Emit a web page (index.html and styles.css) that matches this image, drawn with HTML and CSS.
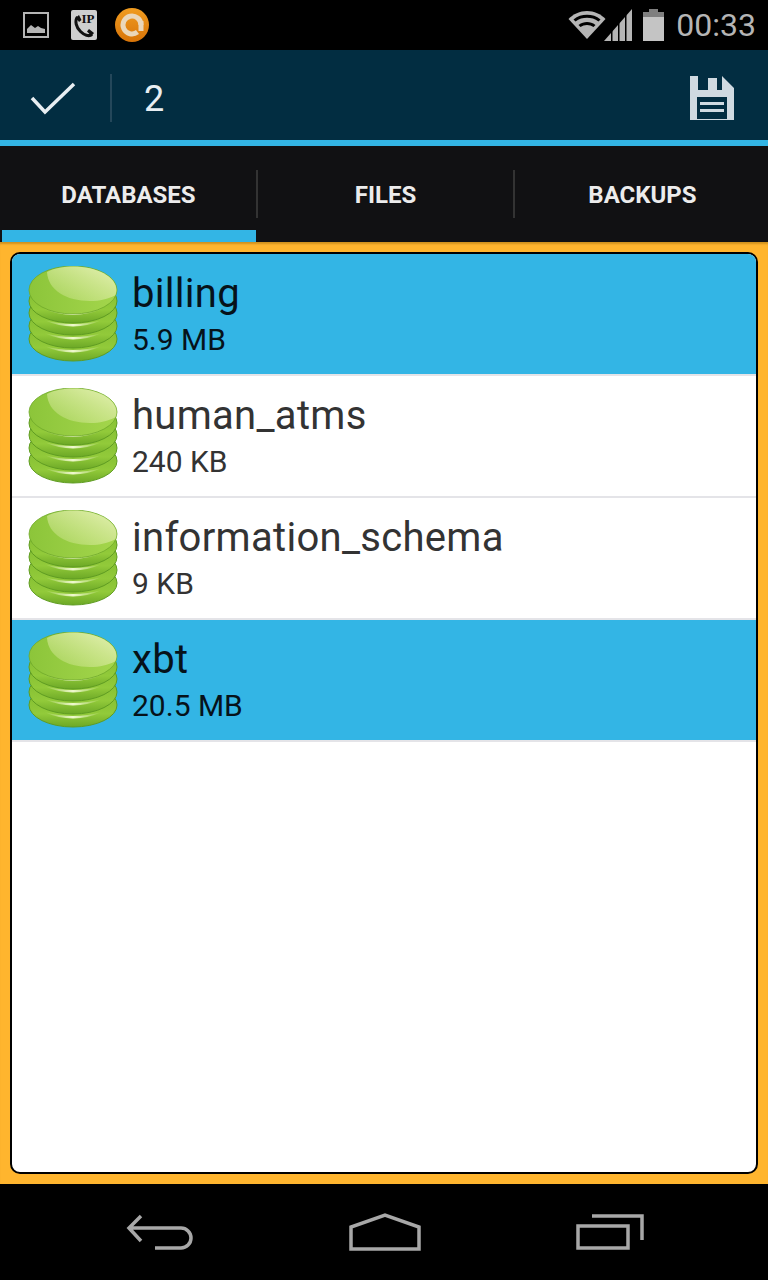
FILE: index.html
```html
<!DOCTYPE html>
<html>
<head>
  <meta charset="utf-8">
  <title>Databases</title>
  <link rel="stylesheet" href="styles.css">
</head>
<body>
  <svg class="defs" width="0" height="0">
    <defs>
      <linearGradient id="side" x1="0" x2="0" y1="0" y2="1">
        <stop offset="0" stop-color="#7cb82e"/>
        <stop offset=".7" stop-color="#92ca3a"/>
        <stop offset="1" stop-color="#6ca826"/>
      </linearGradient>
      <linearGradient id="top" x1="0" x2="1" y1="0" y2="0">
        <stop offset="0" stop-color="#8cc53a"/>
        <stop offset="1" stop-color="#a4d64c"/>
      </linearGradient>
      <linearGradient id="shine" x1="0" x2="1" y1="1" y2="0">
        <stop offset="0" stop-color="#cfe68e" stop-opacity=".3"/>
        <stop offset=".6" stop-color="#d6e99c" stop-opacity=".8"/>
        <stop offset="1" stop-color="#e6f2b6"/>
      </linearGradient>
      <linearGradient id="streak" x1="0" x2="1" y1="0" y2="0">
        <stop offset="0" stop-color="#e8f6bc" stop-opacity="0"/>
        <stop offset=".5" stop-color="#f0f9d0"/>
        <stop offset="1" stop-color="#e8f6bc" stop-opacity="0"/>
      </linearGradient>
      <linearGradient id="orange" x1="0" x2="0" y1="0" y2="1">
        <stop offset="0" stop-color="#f09c20"/>
        <stop offset="1" stop-color="#d87408"/>
      </linearGradient>
      <symbol id="db" viewBox="0 0 90 96">
        <ellipse cx="45" cy="73" rx="44" ry="22" fill="url(#side)" stroke="#5f9c22"/>
        <path d="M16 80Q45 93 74 80Q45 88 16 80z" fill="url(#streak)"/>
        <ellipse cx="45" cy="60" rx="44" ry="22" fill="url(#side)" stroke="#5f9c22"/>
        <path d="M16 67Q45 80 74 67Q45 75 16 67z" fill="url(#streak)"/>
        <ellipse cx="45" cy="47" rx="44" ry="22" fill="url(#side)" stroke="#5f9c22"/>
        <path d="M16 54Q45 67 74 54Q45 62 16 54z" fill="url(#streak)"/>
        <ellipse cx="45" cy="35" rx="44" ry="22" fill="url(#side)" stroke="#5f9c22"/>
        <path d="M14 42Q45 56 76 42Q45 50 14 42z" fill="url(#streak)"/>
        <ellipse cx="45" cy="24" rx="44" ry="24" fill="url(#top)" stroke="#6fa82a" stroke-width=".8"/>
        <path d="M19 6C27 2 36 .6 45 .6c24 0 43.400 10.400 43.400 23.400 0 2-.4 4-1.400 5.500C80 33 72 35 62 35 38 35 20 24 19 6z" fill="url(#shine)"/>
      </symbol>
    </defs>
  </svg>

  <div class="statusbar">
    <div class="status-left">
      <svg width="26" height="26" viewBox="0 0 26 26">
        <rect x="1" y="1" width="24" height="24" fill="none" stroke="#b5b5b5" stroke-width="2"/>
        <path d="M4 21v-4l4-4 4 3 3-2 3 2 4 1v4z" fill="#b5b5b5"/>
      </svg>
      <svg width="26" height="30" viewBox="0 0 26 30">
        <rect width="26" height="30" rx="2" fill="#cfcfcf"/>
        <path d="M6.500 7C3.500 11 5 17 9.500 21.500 13 25 18 27 21 24.500" fill="none" stroke="#111" stroke-width="3"/>
        <path d="M5 7.500 8 5l2.500 5-2.500 2zM16 21.500l2-2.500 5 4-2.500 3z" fill="#111"/>
        <text class="ip" x="10.500" y="13">IP</text>
      </svg>
      <svg class="app-icon" width="34" height="34" viewBox="0 0 34 34">
        <circle cx="17" cy="17" r="17" fill="url(#orange)"/>
        <path d="M26 17a9 9 0 1 0-3.500 7.100" fill="none" stroke="#ead7ba" stroke-width="5"/>
        <path d="M23.500 13h5v10h-5z" fill="#ead7ba"/>
      </svg>
    </div>
    <div class="status-right">
      <svg class="wifi" width="38" height="30" viewBox="0 0 38 30">
        <path d="M19 29 .5 9C5 4 12 1 19 1s14 3 18.500 8z" fill="#b5b5b5"/>
        <path d="M5.500 9.500C9.500 6 14 4.800 19 4.800s9.500 1.200 13.500 4.700l-2 2.100C27 8.700 23 7.800 19 7.800s-8 .9-11.500 3.800zM10.500 15c3-2.200 5.500-3 8.500-3s5.500.8 8.500 3l-2 2.100c-2-1.400-4-2.100-6.500-2.100s-4.500.7-6.500 2.100z" fill="#000"/>
      </svg>
      <svg class="signal" width="28" height="32" viewBox="0 0 28 32">
        <path d="M0 32 28 0v32z" fill="#b5b5b5"/>
        <path d="M7 20h1.500v12H7zM14 14h1.500v18H14zM21 6h1.500v26H21z" fill="#000"/>
      </svg>
      <svg class="battery" width="21" height="32" viewBox="0 0 21 32">
        <path d="M6 0h9v3H6z" fill="#7f7f7f"/>
        <path d="M0 3h21v5H0z" fill="#7f7f7f"/>
        <path d="M0 8h21v24H0z" fill="#c4c4c4"/>
      </svg>
      <span class="clock">00:33</span>
    </div>
  </div>

  <div class="actionbar">
    <div class="done">
      <svg width="46" height="34" viewBox="0 0 46 34">
        <path d="M2 17l13 14L44 3" fill="none" stroke="#e8eef2" stroke-width="3.500"/>
      </svg>
    </div>
    <span class="count">2</span>
    <svg class="save" width="44" height="44" viewBox="0 0 44 44">
      <path fill-rule="evenodd" d="M0 0h32l12 12v32H0zM8 0v14h24V0zM7 21v22h30V21z" fill="#d0dae1"/>
      <path d="M18 2h9v12h-9zM10 26h24v3H10zM10 33h24v3H10z" fill="#d0dae1"/>
    </svg>
  </div>

  <div class="tabs">
    <div class="tab active">DATABASES</div>
    <div class="tab">FILES</div>
    <div class="tab">BACKUPS</div>
  </div>

  <main class="content">
    <div class="panel">
      <div class="row selected">
        <svg class="dbicon" width="90" height="96"><use href="#db"/></svg>
        <div class="info"><div class="name">billing</div><div class="size">5.9 MB</div></div>
      </div>
      <div class="row">
        <svg class="dbicon" width="90" height="96"><use href="#db"/></svg>
        <div class="info"><div class="name">human_atms</div><div class="size">240 KB</div></div>
      </div>
      <div class="row">
        <svg class="dbicon" width="90" height="96"><use href="#db"/></svg>
        <div class="info"><div class="name">information_schema</div><div class="size">9 KB</div></div>
      </div>
      <div class="row selected">
        <svg class="dbicon" width="90" height="96"><use href="#db"/></svg>
        <div class="info"><div class="name">xbt</div><div class="size">20.5 MB</div></div>
      </div>
    </div>
  </main>

  <div class="navbar">
    <svg width="68" height="36" viewBox="0 0 68 36">
      <path d="M15 2 3 14l12 13M3 14h52a10 10 0 0 1 0 20H29" fill="none" stroke="#a8a8a8" stroke-width="3.500"/>
    </svg>
    <svg width="72" height="38" viewBox="0 0 72 38">
      <path d="M2 36V14L36 2l34 12v22z" fill="none" stroke="#a8a8a8" stroke-width="3.500"/>
    </svg>
    <svg width="68" height="36" viewBox="0 0 68 36">
      <path d="M2 12h50v22H2zM16 2h50v24" fill="none" stroke="#a8a8a8" stroke-width="3.500"/>
    </svg>
  </div>
</body>
</html>
```

FILE: styles.css
```css
html, body {
  margin: 0;
  height: 100%;
}

body {
  display: flex;
  flex-direction: column;
  height: 1280px;
  overflow: hidden;
  font-family: Roboto, "Liberation Sans", sans-serif;
  background-color: #000;
}

.defs {
  position: absolute;
}

.statusbar {
  display: flex;
  justify-content: space-between;
  align-items: center;
  height: 50px;
  padding: 0 12px 0 23px;
  background-color: #000;
}

.status-left {
  display: flex;
  align-items: center;
  gap: 22px;
}

.app-icon {
  margin-left: -4px;
}

.ip {
  font-family: "Liberation Serif", serif;
  font-size: 13px;
  font-weight: bold;
  fill: #111;
}

.status-right {
  display: flex;
  align-items: center;
}

.wifi {
  margin-right: -2px;
}

.battery {
  margin-left: 11px;
  margin-right: 12px;
}

.clock {
  font-size: 32px;
  color: #b5b5b5;
  line-height: 50px;
}

.actionbar {
  display: flex;
  align-items: center;
  box-sizing: border-box;
  height: 96px;
  padding: 6px 34px 0 30px;
  background-color: #022d41;
  border-bottom: 6px solid #33b5e5;
}

.done {
  display: flex;
  align-items: center;
  width: 80px;
  height: 48px;
  border-right: 2px solid #24475a;
}

.count {
  margin-left: 32px;
  margin-top: 2px;
  font-size: 36px;
  color: #e8eef2;
}

.save {
  margin-left: auto;
}

.tabs {
  display: flex;
  height: 96px;
  background-color: #111113;
}

.tab {
  position: relative;
  display: flex;
  justify-content: center;
  align-items: center;
  flex: 0 0 257px;
  box-sizing: border-box;
  height: 96px;
  padding-top: 2px;
  font-size: 24px;
  font-weight: bold;
  color: #ececec;
}

.tab::after {
  content: "";
  position: absolute;
  top: 24px;
  right: -1px;
  width: 2px;
  height: 48px;
  background-color: #333;
}

.tab:last-child::after {
  display: none;
}

.tab.active::before {
  content: "";
  position: absolute;
  left: 2px;
  right: 1px;
  bottom: 0;
  height: 12px;
  background-color: #33b5e5;
}

.content {
  flex: 1;
  display: flex;
  padding: 10px;
  background-color: #ffb52e;
  box-shadow: inset 0 3px 2px -1px rgba(120, 80, 0, 0.35);
}

.panel {
  flex: 1;
  overflow: hidden;
  background-color: #fff;
  border: 2px solid #000;
  border-radius: 10px;
}

.row {
  display: flex;
  align-items: center;
  height: 120px;
  padding-left: 16px;
  border-bottom: 2px solid #e4e4e8;
  color: #333;
}

.row.selected {
  background-color: #33b5e5;
  color: #06121a;
}

.dbicon {
  flex: none;
}

.info {
  margin-left: 14px;
  margin-top: 1px;
}

.name {
  font-size: 40px;
  letter-spacing: 0.3px;
  line-height: 46px;
}

.size {
  margin-top: 5px;
  font-size: 30px;
  line-height: 36px;
}

.navbar {
  display: flex;
  justify-content: space-between;
  align-items: center;
  height: 96px;
  padding: 0 124px 0 126px;
  background-color: #000;
}
```
